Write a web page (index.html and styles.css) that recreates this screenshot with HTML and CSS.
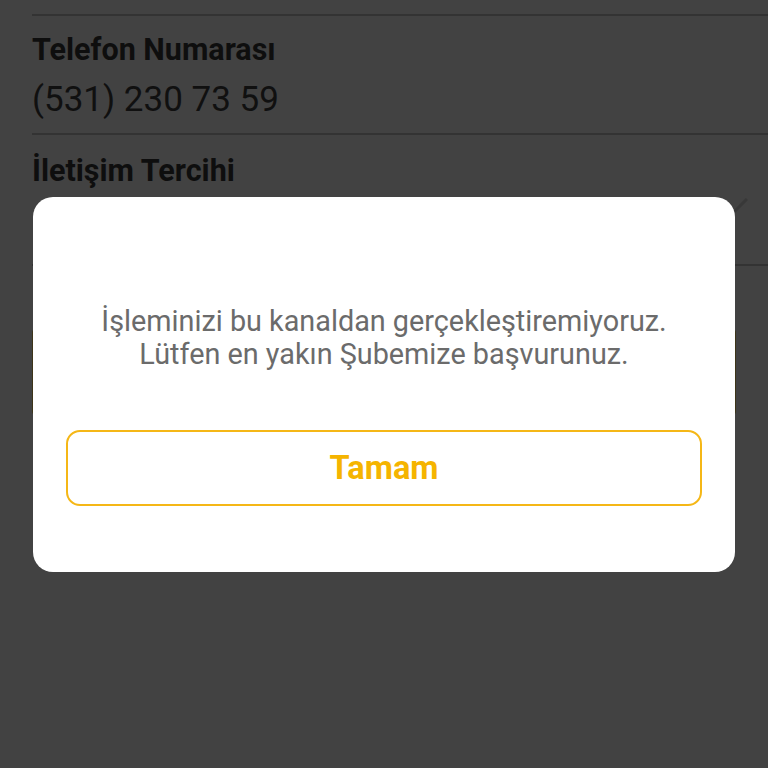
FILE: index.html
```html
<!DOCTYPE html>
<html lang="tr">
<head>
<meta charset="utf-8">
<link rel="stylesheet" href="styles.css">
</head>
<body>
<div class="page">
  <div class="divider top"></div>
  <div class="field phone-field">
    <div class="label">Telefon Numarası</div>
    <div class="value">(531) 230 73 59</div>
  </div>
  <div class="divider"></div>
  <div class="field select-field">
    <div class="label">İletişim Tercihi</div>
    <div class="select-row">
      <svg class="chevron" viewBox="0 0 30 16" width="30" height="16"><path d="M1 1 L15 15 L29 1" fill="none" stroke="#383838" stroke-width="3"/></svg>
    </div>
  </div>
  <div class="divider"></div>
  <div class="primary-btn"></div>
</div>
<div class="overlay">
  <div class="dialog">
    <p class="message">İşleminizi bu kanaldan gerçekleştiremiyoruz.<br>Lütfen en yakın Şubemize başvurunuz.</p>
    <button class="ok-btn">Tamam</button>
  </div>
</div>
</body>
</html>
```
FILE: styles.css
```css
html, body {
  margin: 0;
  padding: 0;
  background: #424242;
  font-family: Roboto, "Noto Sans", sans-serif;
  width: 768px;
  height: 768px;
  overflow: hidden;
}
.page {
  padding-left: 32px;
}
.divider {
  height: 2px;
  background: #333333;
}
.divider.top {
  margin-top: 14px;
}
.phone-field {
  padding-top: 17px;
  padding-bottom: 8px;
}
.label {
  font-weight: 700;
  font-size: 30.5px;
  line-height: 34px;
  color: #0e0e0e;
}
.value {
  margin-top: 8px;
  font-size: 35px;
  line-height: 50px;
  color: #101010;
}
.select-field {
  padding-top: 19px;
}
.select-row {
  height: 76px;
  display: flex;
  justify-content: flex-end;
  align-items: flex-start;
  padding-right: 20px;
}
.chevron {
  margin-top: 10px;
}
.primary-btn {
  margin-top: 63px;
  width: 704px;
  height: 86px;
  background: #3d3519;
  border-radius: 4px;
}
.overlay {
  position: fixed;
  inset: 0;
  display: flex;
  align-items: center;
  justify-content: center;
}
.dialog {
  width: 702px;
  box-sizing: border-box;
  height: 375px;
  background: #ffffff;
  border-radius: 20px;
  padding: 108px 33px 0;
  text-align: center;
}
.message {
  margin: 0;
  font-size: 28.8px;
  line-height: 33px;
  color: #6b6b6b;
}
.ok-btn {
  display: block;
  margin-top: 59px;
  width: 100%;
  height: 76px;
  border: 2px solid #f5b716;
  border-radius: 14px;
  background: #ffffff;
  color: #f5b400;
  font-family: Roboto, "Noto Sans", sans-serif;
  font-weight: 700;
  font-size: 32.5px;
}
```
